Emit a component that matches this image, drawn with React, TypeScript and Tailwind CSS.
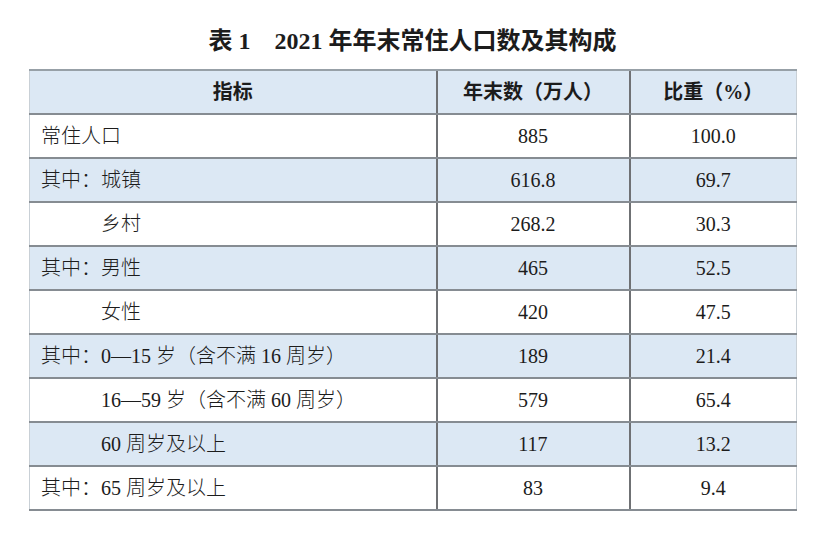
const rows = [
  { name: "常住人口", indent: false, total: "885", share: "100.0", blue: false },
  { name: "其中：城镇", indent: false, total: "616.8", share: "69.7", blue: true },
  { name: "乡村", indent: true, total: "268.2", share: "30.3", blue: false },
  { name: "其中：男性", indent: false, total: "465", share: "52.5", blue: true },
  { name: "女性", indent: true, total: "420", share: "47.5", blue: false },
  { name: "其中：0—15 岁（含不满 16 周岁）", indent: false, total: "189", share: "21.4", blue: true },
  { name: "16—59 岁（含不满 60 周岁）", indent: true, total: "579", share: "65.4", blue: false },
  { name: "60 周岁及以上", indent: true, total: "117", share: "13.2", blue: true },
  { name: "其中：65 周岁及以上", indent: false, total: "83", share: "9.4", blue: false },
]

const App = (): JSX.Element => {
  return (
    <div className="w-[828px] h-[544px] bg-white text-[#1c1c1c] font-['Liberation_Serif','Noto_Sans_CJK_SC',serif] overflow-hidden">
      <div className="pt-[26px] h-[69px] pl-[29px] w-[796px]">
        <h1 className="text-center text-[24px] leading-[30px] font-bold">
          表 1<span className="inline-block w-[24px]"></span>2021 年年末常住人口数及其构成
        </h1>
      </div>
      <div className="pl-[29px]">
        <table className="w-[767px] border-collapse table-fixed text-[20px]">
          <colgroup>
            <col className="w-[407px]" />
            <col className="w-[193px]" />
            <col className="w-[167px]" />
          </colgroup>
          <thead>
            <tr className="h-[44px] bg-[#dce8f4]">
              <th className="border-t-2 border-b-2 border-t-[#97a0a7] border-b-[#868c92] border-l border-l-[#c9d0d6] font-bold">指标</th>
              <th className="border-t-2 border-b-2 border-t-[#97a0a7] border-b-[#868c92] border-l-2 border-l-[#6f7174] font-bold">年末数（万人）</th>
              <th className="border-t-2 border-b-2 border-t-[#97a0a7] border-b-[#868c92] border-l-2 border-l-[#6f7174] border-r border-r-[#c9d0d6] font-bold">比重（%）</th>
            </tr>
          </thead>
          <tbody className="font-light">
            {rows.map((row, index) => (
              <tr key={index} className={`h-[44px] ${row.blue ? "bg-[#dce8f4]" : "bg-white"}`}>
                <td className={`border-b-2 border-b-[#868c92] border-l border-l-[#c9d0d6] ${row.indent ? "pl-[71px]" : "pl-[11px]"}`}>
                  {row.name}
                </td>
                <td className="border-b-2 border-b-[#868c92] border-l-2 border-l-[#6f7174] text-center">{row.total}</td>
                <td className="border-b-2 border-b-[#868c92] border-l-2 border-l-[#6f7174] border-r border-r-[#c9d0d6] text-center">{row.share}</td>
              </tr>
            ))}
          </tbody>
        </table>
      </div>
    </div>
  )
}

export default App
